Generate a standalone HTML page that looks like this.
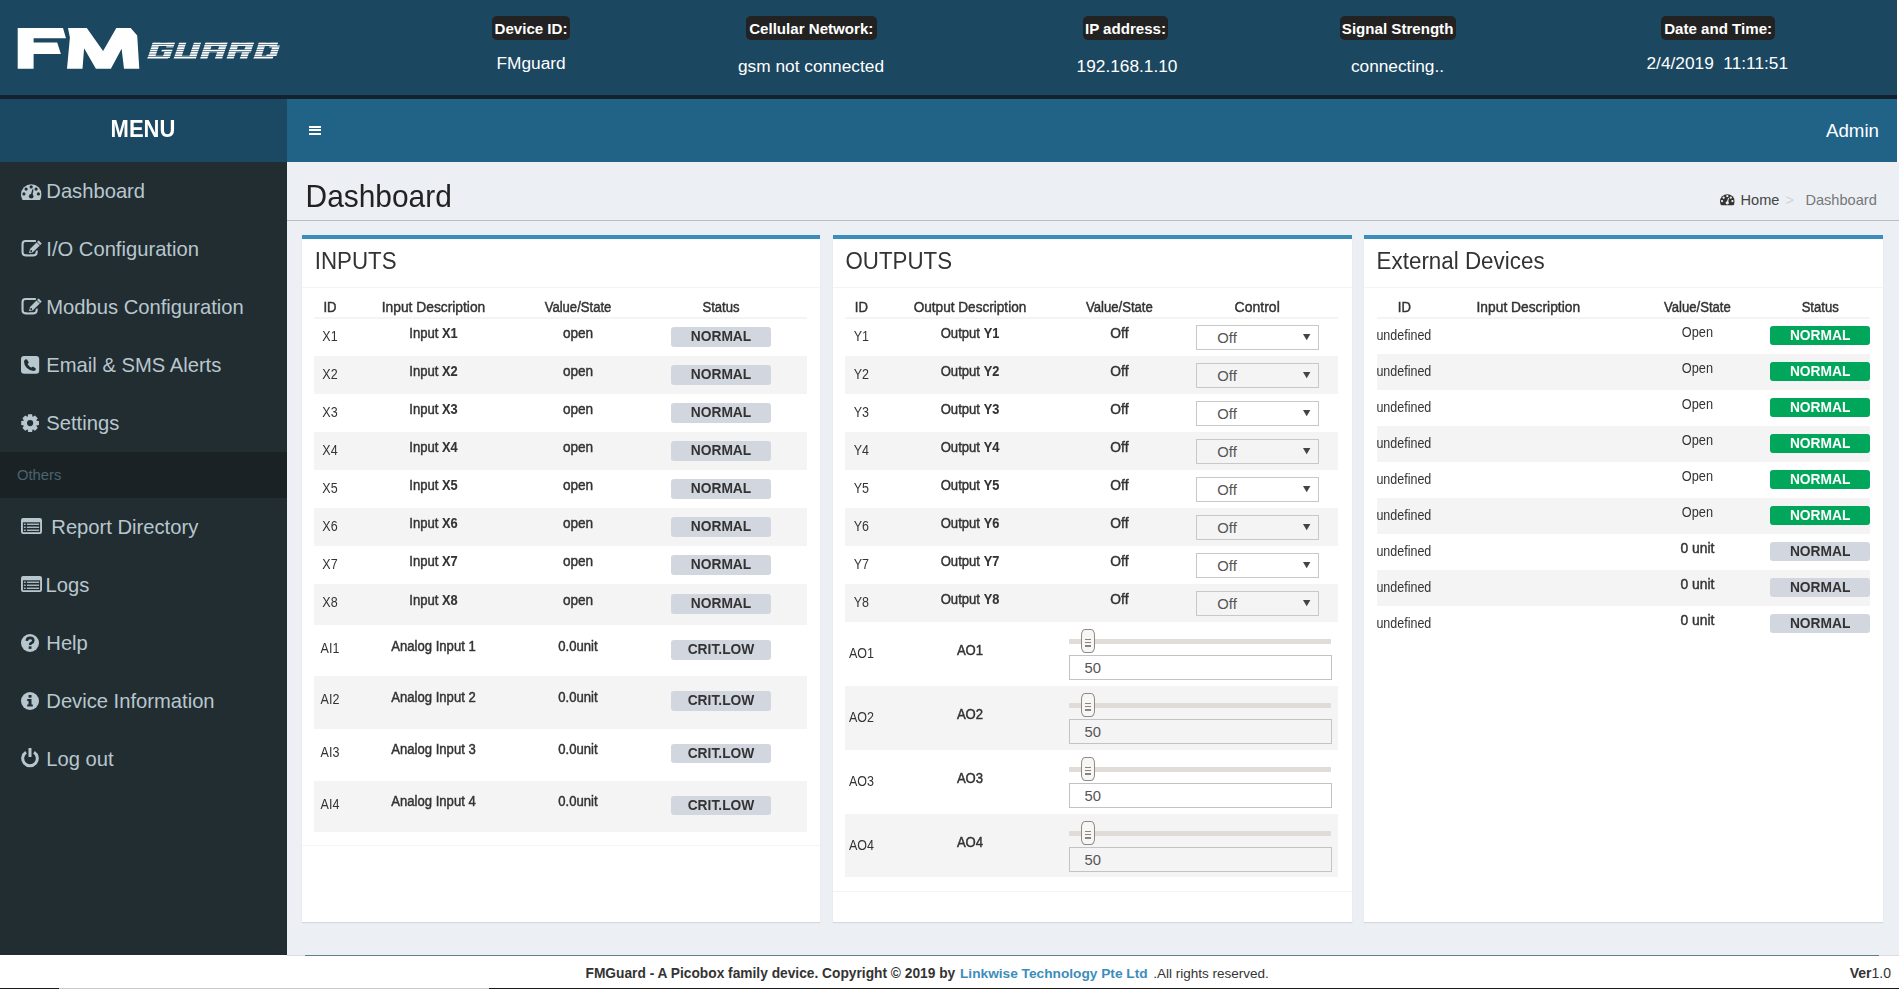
<!DOCTYPE html>
<html><head><meta charset="utf-8"><title>FMGuard Dashboard</title>
<style>
*{box-sizing:border-box;margin:0;padding:0}
html,body{width:1899px;height:989px;overflow:hidden;background:#fff;font-family:"Liberation Sans",sans-serif}
body{position:relative}
svg{position:absolute;overflow:visible}
</style></head><body>

<div style="position:absolute;left:0px;top:0px;width:1897px;height:95px;background:#1b4760;"></div>
<div style="position:absolute;left:0px;top:95px;width:1897px;height:4px;background:#13222d;"></div>
<div style="position:absolute;left:0px;top:99px;width:287px;height:63px;background:#1b4862;"></div>
<div style="position:absolute;left:287px;top:99px;width:1610px;height:63px;background:#216387;"></div>
<div style="position:absolute;left:0px;top:162px;width:287px;height:793px;background:#222d32;"></div>
<div style="position:absolute;left:287px;top:162px;width:1612px;height:793px;background:#ecf0f5;"></div>
<div style="position:absolute;left:0px;top:955px;width:1899px;height:34px;background:#fff;"></div>
<svg style="left:0;top:0" width="300" height="95" viewBox="0 0 300 95">
<polygon fill="#fff" points="17.7,28 63,28 66,38.2 33.6,38.2 33.6,42.5 57.2,42.5 60.9,54 33.6,54 33.6,68.7 17.7,68.7"/>
<polygon fill="#fff" points="68,28 86.8,28 103.1,50.9 116.3,28 130.7,28 137.2,35.4 139.3,68.7 124,68.7 121.6,48.8 110.9,68.7 95.9,68.7 84.1,48.3 82.5,68.7 67,68.7 69.9,37.5"/>
</svg>
<svg style="left:0;top:0" width="300" height="95" viewBox="0 0 300 95">
<defs><mask id="gm" maskUnits="userSpaceOnUse" x="0" y="0" width="300" height="95"><rect x="140" y="42.50" width="150" height="1.75" fill="#fff"/><rect x="140" y="44.87" width="150" height="1.75" fill="#fff"/><rect x="140" y="47.24" width="150" height="1.75" fill="#fff"/><rect x="140" y="49.61" width="150" height="1.75" fill="#fff"/><rect x="140" y="51.99" width="150" height="1.75" fill="#fff"/><rect x="140" y="54.36" width="150" height="1.75" fill="#fff"/><rect x="140" y="56.73" width="150" height="1.75" fill="#fff"/></mask></defs>
<g mask="url(#gm)"><g fill="#fff" transform="translate(0,59.1) skewX(-18.5) translate(0,-16.6)"><rect x="147.30" y="0.00" width="22.00" height="3.40"/><rect x="147.30" y="0.00" width="7.20" height="16.60"/><rect x="147.30" y="13.20" width="20.50" height="3.40"/><rect x="162.10" y="6.90" width="7.20" height="8.70"/><rect x="158.80" y="6.90" width="10.50" height="2.60"/><rect x="162.10" y="0.00" width="7.20" height="5.00"/><rect x="173.60" y="0.00" width="7.20" height="16.60"/><rect x="188.40" y="0.00" width="7.20" height="16.60"/><rect x="173.60" y="13.20" width="22.00" height="3.40"/><rect x="200.00" y="0.00" width="22.00" height="3.40"/><rect x="200.00" y="0.00" width="7.20" height="16.60"/><rect x="214.80" y="0.00" width="7.20" height="16.60"/><rect x="200.00" y="7.00" width="22.00" height="2.80"/><rect x="226.40" y="0.00" width="22.00" height="3.40"/><rect x="226.40" y="0.00" width="7.20" height="16.60"/><rect x="241.20" y="0.00" width="7.20" height="9.80"/><rect x="226.40" y="7.00" width="22.00" height="2.80"/><rect x="239.70" y="9.80" width="7.20" height="6.80"/><rect x="253.40" y="0.00" width="19.00" height="3.40"/><rect x="253.40" y="0.00" width="7.20" height="16.60"/><rect x="268.20" y="3.00" width="7.20" height="10.60"/><rect x="253.40" y="13.20" width="19.00" height="3.40"/><rect x="265.20" y="0.00" width="7.20" height="4.90"/><rect x="265.20" y="11.70" width="7.20" height="4.90"/></g></g>
</svg>
<div style="position:absolute;left:492px;top:16px;width:78px;height:24px;background:#222;border-radius:5px"></div>
<div style="position:absolute;top:21px;font-size:15.1px;line-height:15.1px;font-weight:700;color:#fff;white-space:pre;left:31.00px;width:1000px;text-align:center;">Device ID:</div>
<div style="position:absolute;top:55px;font-size:17.3px;line-height:17.3px;font-weight:400;color:#fff;white-space:pre;left:31.10px;width:1000px;text-align:center;">FMguard</div>
<div style="position:absolute;left:746px;top:16px;width:130.5px;height:24px;background:#222;border-radius:5px"></div>
<div style="position:absolute;top:21px;font-size:15.1px;line-height:15.1px;font-weight:700;color:#fff;white-space:pre;left:311.25px;width:1000px;text-align:center;">Cellular Network:</div>
<div style="position:absolute;top:58px;font-size:17.3px;line-height:17.3px;font-weight:400;color:#fff;white-space:pre;left:311.00px;width:1000px;text-align:center;">gsm not connected</div>
<div style="position:absolute;left:1083px;top:16px;width:85px;height:24px;background:#222;border-radius:5px"></div>
<div style="position:absolute;top:21px;font-size:15.1px;line-height:15.1px;font-weight:700;color:#fff;white-space:pre;left:625.50px;width:1000px;text-align:center;">IP address:</div>
<div style="position:absolute;top:58px;font-size:17.3px;line-height:17.3px;font-weight:400;color:#fff;white-space:pre;left:627.00px;width:1000px;text-align:center;">192.168.1.10</div>
<div style="position:absolute;left:1339.5px;top:16px;width:116.20000000000005px;height:24px;background:#222;border-radius:5px"></div>
<div style="position:absolute;top:21px;font-size:15.1px;line-height:15.1px;font-weight:700;color:#fff;white-space:pre;left:897.60px;width:1000px;text-align:center;">Signal Strength</div>
<div style="position:absolute;top:58px;font-size:17.3px;line-height:17.3px;font-weight:400;color:#fff;white-space:pre;left:897.50px;width:1000px;text-align:center;">connecting..</div>
<div style="position:absolute;left:1661.3px;top:16px;width:113.70000000000005px;height:24px;background:#222;border-radius:5px"></div>
<div style="position:absolute;top:21px;font-size:15.1px;line-height:15.1px;font-weight:700;color:#fff;white-space:pre;left:1218.15px;width:1000px;text-align:center;">Date and Time:</div>
<div style="position:absolute;top:55px;font-size:17.3px;line-height:17.3px;font-weight:400;color:#fff;white-space:pre;left:1217.30px;width:1000px;text-align:center;">2/4/2019  11:11:51</div>
<div style="position:absolute;top:119px;font-size:22px;line-height:22px;font-weight:700;color:#fff;white-space:pre;left:-357.00px;width:1000px;text-align:center;transform:scaleY(1.07);transform-origin:0 18px;">MENU</div>
<div style="position:absolute;left:308.5px;top:125.8px;width:12.4px;height:2px;background:#fff;"></div>
<div style="position:absolute;left:308.5px;top:129.4px;width:12.4px;height:2px;background:#fff;"></div>
<div style="position:absolute;left:308.5px;top:133.0px;width:12.4px;height:2px;background:#fff;"></div>
<div style="position:absolute;top:122px;font-size:18.7px;line-height:18.7px;font-weight:400;color:#fff;white-space:pre;right:20.00px;text-align:right;">Admin</div>
<svg style="left:21.3px;top:183.8px" width="20.6" height="16.1" viewBox="0 0 20.6 16.1"><clipPath id="gc21183"><rect x="0" y="0" width="20.6" height="16.1"/></clipPath>
<circle cx="10.30" cy="10.50" r="10.30" fill="#b8c7ce" clip-path="url(#gc21183)"/>
<g fill="#222d32"><circle cx="10.20" cy="2.90" r="1.60"/><circle cx="5.10" cy="5.10" r="1.60"/><circle cx="15.10" cy="5.10" r="1.60"/>
<circle cx="2.90" cy="9.90" r="1.60"/><circle cx="17.40" cy="9.90" r="1.60"/>
<path d="M9.40,12.00 L11.40,5.30 L12.50,5.60 L11.30,12.30 Z"/><circle cx="10.20" cy="12.30" r="2.30"/></g></svg>
<div style="position:absolute;top:181px;font-size:20.2px;line-height:20.2px;font-weight:400;color:#b8c7ce;white-space:pre;left:46.30px;">Dashboard</div>
<svg style="left:20.8px;top:239.8px" width="22" height="16.5" viewBox="0 0 22 16.5"><path fill="none" stroke="#b8c7ce" stroke-width="2.1" d="M14.9,1.05 H4.55 Q1.55,1.05 1.55,4.05 V12.35 Q1.55,15.35 4.55,15.35 H12.65 Q15.65,15.35 15.65,12.35 V10.6"/>
<polygon fill="#b8c7ce" stroke="#222d32" stroke-width="1.1" points="7.4,13.7 8.42,8.86 17.6,-0.3 21.5,3.6 12.24,12.68"/>
<path stroke="#222d32" stroke-width="0.9" d="M15.5,2.0 L19.2,5.7"/><circle cx="10.2" cy="11.0" r="1.0" fill="#222d32"/></svg>
<div style="position:absolute;top:239px;font-size:20.2px;line-height:20.2px;font-weight:400;color:#b8c7ce;white-space:pre;left:46.30px;">I/O Configuration</div>
<svg style="left:20.8px;top:297.8px" width="22" height="16.5" viewBox="0 0 22 16.5"><path fill="none" stroke="#b8c7ce" stroke-width="2.1" d="M14.9,1.05 H4.55 Q1.55,1.05 1.55,4.05 V12.35 Q1.55,15.35 4.55,15.35 H12.65 Q15.65,15.35 15.65,12.35 V10.6"/>
<polygon fill="#b8c7ce" stroke="#222d32" stroke-width="1.1" points="7.4,13.7 8.42,8.86 17.6,-0.3 21.5,3.6 12.24,12.68"/>
<path stroke="#222d32" stroke-width="0.9" d="M15.5,2.0 L19.2,5.7"/><circle cx="10.2" cy="11.0" r="1.0" fill="#222d32"/></svg>
<div style="position:absolute;top:297px;font-size:20.2px;line-height:20.2px;font-weight:400;color:#b8c7ce;white-space:pre;left:46.30px;">Modbus Configuration</div>
<svg style="left:21px;top:356px" width="18.2" height="17.7" viewBox="0 0 18.2 17.7"><rect x="0" y="0" width="18.2" height="17.7" rx="3.2" fill="#b8c7ce"/>
<path fill="#222d32" d="M4.3,3.6 Q5.4,2.9 6,3.6 L7.6,6 Q8,6.7 7.3,7.3 L6.6,7.9 Q7.8,10.3 10.2,11.7 L10.9,11 Q11.5,10.4 12.2,10.8 L14.5,12.3 Q15.2,12.9 14.6,13.9 Q13.8,15 12.6,15 Q8.6,14.8 5.6,11.8 Q3,9 3,5.6 Q3.1,4.4 4.3,3.6 Z"/></svg>
<div style="position:absolute;top:355px;font-size:20.2px;line-height:20.2px;font-weight:400;color:#b8c7ce;white-space:pre;left:46.30px;">Email &amp; SMS Alerts</div>
<svg style="left:21px;top:414px" width="18.2" height="18.2" viewBox="0 0 18.2 18.2"><polygon fill="#b8c7ce" points="17.98,7.11 17.98,11.09 15.56,11.53 15.39,11.95 16.78,13.98 13.98,16.78 11.95,15.39 11.53,15.56 11.09,17.98 7.11,17.98 6.67,15.56 6.25,15.39 4.22,16.78 1.42,13.98 2.81,11.95 2.64,11.53 0.22,11.09 0.22,7.11 2.64,6.67 2.81,6.25 1.42,4.22 4.22,1.42 6.25,2.81 6.67,2.64 7.11,0.22 11.09,0.22 11.53,2.64 11.95,2.81 13.98,1.42 16.78,4.22 15.39,6.25 15.56,6.67"/><circle cx="9.1" cy="9.1" r="5.9" fill="#b8c7ce"/><circle cx="9.1" cy="9.1" r="3.1" fill="#222d32"/></svg>
<div style="position:absolute;top:413px;font-size:20.2px;line-height:20.2px;font-weight:400;color:#b8c7ce;white-space:pre;left:46.30px;">Settings</div>
<div style="position:absolute;left:0px;top:452px;width:287px;height:46px;background:#1a2226;"></div>
<div style="position:absolute;top:468px;font-size:14.8px;line-height:14.8px;font-weight:400;color:#4b646f;white-space:pre;left:17.00px;">Others</div>
<svg style="left:21px;top:517.8px" width="21" height="16" viewBox="0 0 21 16"><rect x="0" y="0" width="21" height="16" rx="2.2" fill="#b8c7ce"/>
<rect x="1.9" y="4.3" width="17.2" height="9.9" fill="#222d32"/>
<g fill="#b8c7ce"><rect x="2.9" y="5.6" width="1.8" height="1.3"/><rect x="2.9" y="8.6" width="1.8" height="1.3"/><rect x="2.9" y="11.6" width="1.8" height="1.3"/>
<rect x="5.9" y="5.6" width="12.2" height="1.3"/><rect x="5.9" y="8.6" width="12.2" height="1.3"/><rect x="5.9" y="11.6" width="12.2" height="1.3"/></g></svg>
<div style="position:absolute;top:517px;font-size:20.2px;line-height:20.2px;font-weight:400;color:#b8c7ce;white-space:pre;left:51.30px;">Report Directory</div>
<svg style="left:21px;top:575.8px" width="21" height="16" viewBox="0 0 21 16"><rect x="0" y="0" width="21" height="16" rx="2.2" fill="#b8c7ce"/>
<rect x="1.9" y="4.3" width="17.2" height="9.9" fill="#222d32"/>
<g fill="#b8c7ce"><rect x="2.9" y="5.6" width="1.8" height="1.3"/><rect x="2.9" y="8.6" width="1.8" height="1.3"/><rect x="2.9" y="11.6" width="1.8" height="1.3"/>
<rect x="5.9" y="5.6" width="12.2" height="1.3"/><rect x="5.9" y="8.6" width="12.2" height="1.3"/><rect x="5.9" y="11.6" width="12.2" height="1.3"/></g></svg>
<div style="position:absolute;top:575px;font-size:20.2px;line-height:20.2px;font-weight:400;color:#b8c7ce;white-space:pre;left:45.60px;">Logs</div>
<svg style="left:21px;top:633.8px" width="18" height="18" viewBox="0 0 18 18"><circle cx="9" cy="9" r="9" fill="#b8c7ce"/>
<path fill="none" stroke="#222d32" stroke-width="2.6" d="M5.8,6.9 Q5.9,3.9 9.1,3.9 Q12.3,3.9 12.3,6.6 Q12.3,8.2 10.4,9 Q9.1,9.6 9.1,11"/><rect x="7.7" y="12.3" width="2.8" height="2.6" fill="#222d32"/></svg>
<div style="position:absolute;top:633px;font-size:20.2px;line-height:20.2px;font-weight:400;color:#b8c7ce;white-space:pre;left:46.30px;">Help</div>
<svg style="left:21px;top:691.8px" width="18" height="18" viewBox="0 0 18 18"><circle cx="9" cy="9" r="9" fill="#b8c7ce"/>
<rect x="7.6" y="3" width="2.9" height="2.7" fill="#222d32"/><path fill="#222d32" d="M6.2,7 H10.5 V12.6 H11.8 V14.6 H6.2 V12.6 H7.5 V9 H6.2 Z"/></svg>
<div style="position:absolute;top:691px;font-size:20.2px;line-height:20.2px;font-weight:400;color:#b8c7ce;white-space:pre;left:46.30px;">Device Information</div>
<svg style="left:21px;top:748.4px" width="18" height="18" viewBox="0 0 18 18"><path fill="none" stroke="#b8c7ce" stroke-width="3" d="M5,4.3 A7.3,7.3 0 1 0 13,4.3"/><rect x="7.5" y="0" width="3" height="9" rx="0.6" fill="#b8c7ce"/></svg>
<div style="position:absolute;top:749px;font-size:20.2px;line-height:20.2px;font-weight:400;color:#b8c7ce;white-space:pre;left:46.30px;">Log out</div>
<div style="position:absolute;top:182px;font-size:29.9px;line-height:29.9px;font-weight:400;color:#222;white-space:pre;left:305.60px;transform:scaleY(1.07);transform-origin:0 25px;">Dashboard</div>
<div style="position:absolute;left:287px;top:220px;width:1612px;height:1px;background:#b9bec4;"></div>
<svg style="left:1719.5px;top:194px" width="14.7" height="11.2" viewBox="0 0 14.7 11.2"><clipPath id="gc1719194"><rect x="0" y="0" width="14.7" height="11.2"/></clipPath>
<circle cx="7.35" cy="7.49" r="7.35" fill="#333" clip-path="url(#gc1719194)"/>
<g fill="#ecf0f5"><circle cx="7.28" cy="2.07" r="1.14"/><circle cx="3.64" cy="3.64" r="1.14"/><circle cx="10.78" cy="3.64" r="1.14"/>
<circle cx="2.07" cy="7.06" r="1.14"/><circle cx="12.42" cy="7.06" r="1.14"/>
<path d="M6.71,8.56 L8.13,3.78 L8.92,4.00 L8.06,8.78 Z"/><circle cx="7.28" cy="8.78" r="1.64"/></g></svg>
<div style="position:absolute;top:193px;font-size:14.6px;line-height:14.6px;font-weight:400;color:#444;white-space:pre;left:1740.50px;">Home</div>
<div style="position:absolute;top:193px;font-size:14.6px;line-height:14.6px;font-weight:400;color:#d2d2d2;white-space:pre;left:1785.50px;">&gt;</div>
<div style="position:absolute;top:193px;font-size:14.6px;line-height:14.6px;font-weight:400;color:#777;white-space:pre;left:1805.40px;">Dashboard</div>
<div style="position:absolute;left:302px;top:235px;width:518px;height:687px;background:#fff;border-top:4px solid #3c8dbc;box-shadow:0 1px 1px rgba(0,0,0,0.1)"></div>
<div style="position:absolute;left:302px;top:287px;width:518px;height:1px;background:#f4f4f4;"></div>
<div style="position:absolute;left:833px;top:235px;width:519px;height:687px;background:#fff;border-top:4px solid #3c8dbc;box-shadow:0 1px 1px rgba(0,0,0,0.1)"></div>
<div style="position:absolute;left:833px;top:287px;width:519px;height:1px;background:#f4f4f4;"></div>
<div style="position:absolute;left:1364px;top:235px;width:519px;height:687px;background:#fff;border-top:4px solid #3c8dbc;box-shadow:0 1px 1px rgba(0,0,0,0.1)"></div>
<div style="position:absolute;left:1364px;top:287px;width:519px;height:1px;background:#f4f4f4;"></div>
<div style="position:absolute;top:251px;font-size:22.3px;line-height:22.3px;font-weight:400;color:#333;white-space:pre;left:314.80px;transform:scaleY(1.1);transform-origin:0 18px;">INPUTS</div>
<div style="position:absolute;top:251px;font-size:22.3px;line-height:22.3px;font-weight:400;color:#333;white-space:pre;left:845.50px;transform:scaleY(1.1);transform-origin:0 18px;">OUTPUTS</div>
<div style="position:absolute;top:251px;font-size:22.4px;line-height:22.4px;font-weight:400;color:#333;white-space:pre;left:1376.60px;transform:scaleY(1.1);transform-origin:0 18px;">External Devices</div>
<div style="position:absolute;top:301px;font-size:13.1px;line-height:13.1px;font-weight:400;color:#333;white-space:pre;left:230.00px;width:200px;text-align:center;transform:scaleY(1.08);transform-origin:0 11px;-webkit-text-stroke:0.42px #333;">ID</div>
<div style="position:absolute;top:301px;font-size:13.8px;line-height:13.8px;font-weight:400;color:#333;white-space:pre;left:333.50px;width:200px;text-align:center;transform:scaleY(1.08);transform-origin:0 11px;-webkit-text-stroke:0.42px #333;">Input Description</div>
<div style="position:absolute;top:301px;font-size:13.1px;line-height:13.1px;font-weight:400;color:#333;white-space:pre;left:478.00px;width:200px;text-align:center;transform:scaleY(1.08);transform-origin:0 11px;-webkit-text-stroke:0.42px #333;">Value/State</div>
<div style="position:absolute;top:301px;font-size:13.1px;line-height:13.1px;font-weight:400;color:#333;white-space:pre;left:621.00px;width:200px;text-align:center;transform:scaleY(1.08);transform-origin:0 11px;-webkit-text-stroke:0.42px #333;">Status</div>
<div style="position:absolute;left:314px;top:317px;width:493px;height:2px;background:#f4f4f4;"></div>
<div style="position:absolute;top:331px;font-size:12.5px;line-height:12.5px;font-weight:400;color:#333;white-space:pre;left:230.00px;width:200px;text-align:center;transform:scaleY(1.12);transform-origin:0 10px;">X1</div>
<div style="position:absolute;top:327px;font-size:13.1px;line-height:13.1px;font-weight:400;color:#333;white-space:pre;left:333.50px;width:200px;text-align:center;transform:scaleY(1.08);transform-origin:0 11px;-webkit-text-stroke:0.42px #333;">Input <span style="font-weight:700;-webkit-text-stroke:0.1px #333;font-size:12.8px">X1</span></div>
<div style="position:absolute;top:327px;font-size:13.6px;line-height:13.6px;font-weight:400;color:#333;white-space:pre;left:478.00px;width:200px;text-align:center;transform:scaleY(1.08);transform-origin:0 11px;-webkit-text-stroke:0.42px #333;">open</div>
<div style="position:absolute;left:671.00px;top:327.20px;width:100px;height:19.5px;background:#d2d6de;border-radius:3px"></div>
<div style="position:absolute;top:330px;font-size:13.8px;line-height:13.8px;font-weight:700;color:#333;white-space:pre;left:621.00px;width:200px;text-align:center;transform:scaleY(1.04);transform-origin:0 11px;">NORMAL</div>
<div style="position:absolute;left:314px;top:356px;width:493px;height:38px;background:#f4f4f4;"></div>
<div style="position:absolute;top:369px;font-size:12.5px;line-height:12.5px;font-weight:400;color:#333;white-space:pre;left:230.00px;width:200px;text-align:center;transform:scaleY(1.12);transform-origin:0 10px;">X2</div>
<div style="position:absolute;top:365px;font-size:13.1px;line-height:13.1px;font-weight:400;color:#333;white-space:pre;left:333.50px;width:200px;text-align:center;transform:scaleY(1.08);transform-origin:0 11px;-webkit-text-stroke:0.42px #333;">Input <span style="font-weight:700;-webkit-text-stroke:0.1px #333;font-size:12.8px">X2</span></div>
<div style="position:absolute;top:365px;font-size:13.6px;line-height:13.6px;font-weight:400;color:#333;white-space:pre;left:478.00px;width:200px;text-align:center;transform:scaleY(1.08);transform-origin:0 11px;-webkit-text-stroke:0.42px #333;">open</div>
<div style="position:absolute;left:671.00px;top:365.20px;width:100px;height:19.5px;background:#d2d6de;border-radius:3px"></div>
<div style="position:absolute;top:368px;font-size:13.8px;line-height:13.8px;font-weight:700;color:#333;white-space:pre;left:621.00px;width:200px;text-align:center;transform:scaleY(1.04);transform-origin:0 11px;">NORMAL</div>
<div style="position:absolute;top:407px;font-size:12.5px;line-height:12.5px;font-weight:400;color:#333;white-space:pre;left:230.00px;width:200px;text-align:center;transform:scaleY(1.12);transform-origin:0 10px;">X3</div>
<div style="position:absolute;top:403px;font-size:13.1px;line-height:13.1px;font-weight:400;color:#333;white-space:pre;left:333.50px;width:200px;text-align:center;transform:scaleY(1.08);transform-origin:0 11px;-webkit-text-stroke:0.42px #333;">Input <span style="font-weight:700;-webkit-text-stroke:0.1px #333;font-size:12.8px">X3</span></div>
<div style="position:absolute;top:403px;font-size:13.6px;line-height:13.6px;font-weight:400;color:#333;white-space:pre;left:478.00px;width:200px;text-align:center;transform:scaleY(1.08);transform-origin:0 11px;-webkit-text-stroke:0.42px #333;">open</div>
<div style="position:absolute;left:671.00px;top:403.20px;width:100px;height:19.5px;background:#d2d6de;border-radius:3px"></div>
<div style="position:absolute;top:406px;font-size:13.8px;line-height:13.8px;font-weight:700;color:#333;white-space:pre;left:621.00px;width:200px;text-align:center;transform:scaleY(1.04);transform-origin:0 11px;">NORMAL</div>
<div style="position:absolute;left:314px;top:432px;width:493px;height:38px;background:#f4f4f4;"></div>
<div style="position:absolute;top:445px;font-size:12.5px;line-height:12.5px;font-weight:400;color:#333;white-space:pre;left:230.00px;width:200px;text-align:center;transform:scaleY(1.12);transform-origin:0 10px;">X4</div>
<div style="position:absolute;top:441px;font-size:13.1px;line-height:13.1px;font-weight:400;color:#333;white-space:pre;left:333.50px;width:200px;text-align:center;transform:scaleY(1.08);transform-origin:0 11px;-webkit-text-stroke:0.42px #333;">Input <span style="font-weight:700;-webkit-text-stroke:0.1px #333;font-size:12.8px">X4</span></div>
<div style="position:absolute;top:441px;font-size:13.6px;line-height:13.6px;font-weight:400;color:#333;white-space:pre;left:478.00px;width:200px;text-align:center;transform:scaleY(1.08);transform-origin:0 11px;-webkit-text-stroke:0.42px #333;">open</div>
<div style="position:absolute;left:671.00px;top:441.20px;width:100px;height:19.5px;background:#d2d6de;border-radius:3px"></div>
<div style="position:absolute;top:444px;font-size:13.8px;line-height:13.8px;font-weight:700;color:#333;white-space:pre;left:621.00px;width:200px;text-align:center;transform:scaleY(1.04);transform-origin:0 11px;">NORMAL</div>
<div style="position:absolute;top:483px;font-size:12.5px;line-height:12.5px;font-weight:400;color:#333;white-space:pre;left:230.00px;width:200px;text-align:center;transform:scaleY(1.12);transform-origin:0 10px;">X5</div>
<div style="position:absolute;top:479px;font-size:13.1px;line-height:13.1px;font-weight:400;color:#333;white-space:pre;left:333.50px;width:200px;text-align:center;transform:scaleY(1.08);transform-origin:0 11px;-webkit-text-stroke:0.42px #333;">Input <span style="font-weight:700;-webkit-text-stroke:0.1px #333;font-size:12.8px">X5</span></div>
<div style="position:absolute;top:479px;font-size:13.6px;line-height:13.6px;font-weight:400;color:#333;white-space:pre;left:478.00px;width:200px;text-align:center;transform:scaleY(1.08);transform-origin:0 11px;-webkit-text-stroke:0.42px #333;">open</div>
<div style="position:absolute;left:671.00px;top:479.20px;width:100px;height:19.5px;background:#d2d6de;border-radius:3px"></div>
<div style="position:absolute;top:482px;font-size:13.8px;line-height:13.8px;font-weight:700;color:#333;white-space:pre;left:621.00px;width:200px;text-align:center;transform:scaleY(1.04);transform-origin:0 11px;">NORMAL</div>
<div style="position:absolute;left:314px;top:508px;width:493px;height:38px;background:#f4f4f4;"></div>
<div style="position:absolute;top:521px;font-size:12.5px;line-height:12.5px;font-weight:400;color:#333;white-space:pre;left:230.00px;width:200px;text-align:center;transform:scaleY(1.12);transform-origin:0 10px;">X6</div>
<div style="position:absolute;top:517px;font-size:13.1px;line-height:13.1px;font-weight:400;color:#333;white-space:pre;left:333.50px;width:200px;text-align:center;transform:scaleY(1.08);transform-origin:0 11px;-webkit-text-stroke:0.42px #333;">Input <span style="font-weight:700;-webkit-text-stroke:0.1px #333;font-size:12.8px">X6</span></div>
<div style="position:absolute;top:517px;font-size:13.6px;line-height:13.6px;font-weight:400;color:#333;white-space:pre;left:478.00px;width:200px;text-align:center;transform:scaleY(1.08);transform-origin:0 11px;-webkit-text-stroke:0.42px #333;">open</div>
<div style="position:absolute;left:671.00px;top:517.20px;width:100px;height:19.5px;background:#d2d6de;border-radius:3px"></div>
<div style="position:absolute;top:520px;font-size:13.8px;line-height:13.8px;font-weight:700;color:#333;white-space:pre;left:621.00px;width:200px;text-align:center;transform:scaleY(1.04);transform-origin:0 11px;">NORMAL</div>
<div style="position:absolute;top:559px;font-size:12.5px;line-height:12.5px;font-weight:400;color:#333;white-space:pre;left:230.00px;width:200px;text-align:center;transform:scaleY(1.12);transform-origin:0 10px;">X7</div>
<div style="position:absolute;top:555px;font-size:13.1px;line-height:13.1px;font-weight:400;color:#333;white-space:pre;left:333.50px;width:200px;text-align:center;transform:scaleY(1.08);transform-origin:0 11px;-webkit-text-stroke:0.42px #333;">Input <span style="font-weight:700;-webkit-text-stroke:0.1px #333;font-size:12.8px">X7</span></div>
<div style="position:absolute;top:555px;font-size:13.6px;line-height:13.6px;font-weight:400;color:#333;white-space:pre;left:478.00px;width:200px;text-align:center;transform:scaleY(1.08);transform-origin:0 11px;-webkit-text-stroke:0.42px #333;">open</div>
<div style="position:absolute;left:671.00px;top:555.20px;width:100px;height:19.5px;background:#d2d6de;border-radius:3px"></div>
<div style="position:absolute;top:558px;font-size:13.8px;line-height:13.8px;font-weight:700;color:#333;white-space:pre;left:621.00px;width:200px;text-align:center;transform:scaleY(1.04);transform-origin:0 11px;">NORMAL</div>
<div style="position:absolute;left:314px;top:584px;width:493px;height:41px;background:#f4f4f4;"></div>
<div style="position:absolute;top:597px;font-size:12.5px;line-height:12.5px;font-weight:400;color:#333;white-space:pre;left:230.00px;width:200px;text-align:center;transform:scaleY(1.12);transform-origin:0 10px;">X8</div>
<div style="position:absolute;top:594px;font-size:13.1px;line-height:13.1px;font-weight:400;color:#333;white-space:pre;left:333.50px;width:200px;text-align:center;transform:scaleY(1.08);transform-origin:0 11px;-webkit-text-stroke:0.42px #333;">Input <span style="font-weight:700;-webkit-text-stroke:0.1px #333;font-size:12.8px">X8</span></div>
<div style="position:absolute;top:594px;font-size:13.6px;line-height:13.6px;font-weight:400;color:#333;white-space:pre;left:478.00px;width:200px;text-align:center;transform:scaleY(1.08);transform-origin:0 11px;-webkit-text-stroke:0.42px #333;">open</div>
<div style="position:absolute;left:671.00px;top:594.20px;width:100px;height:19.5px;background:#d2d6de;border-radius:3px"></div>
<div style="position:absolute;top:597px;font-size:13.8px;line-height:13.8px;font-weight:700;color:#333;white-space:pre;left:621.00px;width:200px;text-align:center;transform:scaleY(1.04);transform-origin:0 11px;">NORMAL</div>
<div style="position:absolute;top:643px;font-size:12.5px;line-height:12.5px;font-weight:400;color:#333;white-space:pre;left:230.00px;width:200px;text-align:center;transform:scaleY(1.12);transform-origin:0 10px;">AI1</div>
<div style="position:absolute;top:640px;font-size:13.1px;line-height:13.1px;font-weight:400;color:#333;white-space:pre;left:333.50px;width:200px;text-align:center;transform:scaleY(1.08);transform-origin:0 11px;-webkit-text-stroke:0.42px #333;">Analog Input 1</div>
<div style="position:absolute;top:640px;font-size:13.1px;line-height:13.1px;font-weight:400;color:#333;white-space:pre;left:478.00px;width:200px;text-align:center;transform:scaleY(1.08);transform-origin:0 11px;-webkit-text-stroke:0.42px #333;">0.0unit</div>
<div style="position:absolute;left:671.00px;top:640.00px;width:100px;height:19.5px;background:#d2d6de;border-radius:3px"></div>
<div style="position:absolute;top:643px;font-size:13.8px;line-height:13.8px;font-weight:700;color:#333;white-space:pre;left:621.00px;width:200px;text-align:center;transform:scaleY(1.04);transform-origin:0 11px;">CRIT.LOW</div>
<div style="position:absolute;left:314px;top:676px;width:493px;height:52.5px;background:#f4f4f4;"></div>
<div style="position:absolute;top:694px;font-size:12.5px;line-height:12.5px;font-weight:400;color:#333;white-space:pre;left:230.00px;width:200px;text-align:center;transform:scaleY(1.12);transform-origin:0 10px;">AI2</div>
<div style="position:absolute;top:691px;font-size:13.1px;line-height:13.1px;font-weight:400;color:#333;white-space:pre;left:333.50px;width:200px;text-align:center;transform:scaleY(1.08);transform-origin:0 11px;-webkit-text-stroke:0.42px #333;">Analog Input 2</div>
<div style="position:absolute;top:691px;font-size:13.1px;line-height:13.1px;font-weight:400;color:#333;white-space:pre;left:478.00px;width:200px;text-align:center;transform:scaleY(1.08);transform-origin:0 11px;-webkit-text-stroke:0.42px #333;">0.0unit</div>
<div style="position:absolute;left:671.00px;top:691.00px;width:100px;height:19.5px;background:#d2d6de;border-radius:3px"></div>
<div style="position:absolute;top:694px;font-size:13.8px;line-height:13.8px;font-weight:700;color:#333;white-space:pre;left:621.00px;width:200px;text-align:center;transform:scaleY(1.04);transform-origin:0 11px;">CRIT.LOW</div>
<div style="position:absolute;top:747px;font-size:12.5px;line-height:12.5px;font-weight:400;color:#333;white-space:pre;left:230.00px;width:200px;text-align:center;transform:scaleY(1.12);transform-origin:0 10px;">AI3</div>
<div style="position:absolute;top:743px;font-size:13.1px;line-height:13.1px;font-weight:400;color:#333;white-space:pre;left:333.50px;width:200px;text-align:center;transform:scaleY(1.08);transform-origin:0 11px;-webkit-text-stroke:0.42px #333;">Analog Input 3</div>
<div style="position:absolute;top:743px;font-size:13.1px;line-height:13.1px;font-weight:400;color:#333;white-space:pre;left:478.00px;width:200px;text-align:center;transform:scaleY(1.08);transform-origin:0 11px;-webkit-text-stroke:0.42px #333;">0.0unit</div>
<div style="position:absolute;left:671.00px;top:743.50px;width:100px;height:19.5px;background:#d2d6de;border-radius:3px"></div>
<div style="position:absolute;top:747px;font-size:13.8px;line-height:13.8px;font-weight:700;color:#333;white-space:pre;left:621.00px;width:200px;text-align:center;transform:scaleY(1.04);transform-origin:0 11px;">CRIT.LOW</div>
<div style="position:absolute;left:314px;top:780.5px;width:493px;height:51px;background:#f4f4f4;"></div>
<div style="position:absolute;top:799px;font-size:12.5px;line-height:12.5px;font-weight:400;color:#333;white-space:pre;left:230.00px;width:200px;text-align:center;transform:scaleY(1.12);transform-origin:0 10px;">AI4</div>
<div style="position:absolute;top:795px;font-size:13.1px;line-height:13.1px;font-weight:400;color:#333;white-space:pre;left:333.50px;width:200px;text-align:center;transform:scaleY(1.08);transform-origin:0 11px;-webkit-text-stroke:0.42px #333;">Analog Input 4</div>
<div style="position:absolute;top:795px;font-size:13.1px;line-height:13.1px;font-weight:400;color:#333;white-space:pre;left:478.00px;width:200px;text-align:center;transform:scaleY(1.08);transform-origin:0 11px;-webkit-text-stroke:0.42px #333;">0.0unit</div>
<div style="position:absolute;left:671.00px;top:795.50px;width:100px;height:19.5px;background:#d2d6de;border-radius:3px"></div>
<div style="position:absolute;top:799px;font-size:13.8px;line-height:13.8px;font-weight:700;color:#333;white-space:pre;left:621.00px;width:200px;text-align:center;transform:scaleY(1.04);transform-origin:0 11px;">CRIT.LOW</div>
<div style="position:absolute;left:302px;top:845px;width:518px;height:1px;background:#f4f4f4;"></div>
<div style="position:absolute;top:301px;font-size:13.1px;line-height:13.1px;font-weight:400;color:#333;white-space:pre;left:761.40px;width:200px;text-align:center;transform:scaleY(1.08);transform-origin:0 11px;-webkit-text-stroke:0.42px #333;">ID</div>
<div style="position:absolute;top:301px;font-size:13.6px;line-height:13.6px;font-weight:400;color:#333;white-space:pre;left:870.00px;width:200px;text-align:center;transform:scaleY(1.08);transform-origin:0 11px;-webkit-text-stroke:0.42px #333;">Output Description</div>
<div style="position:absolute;top:301px;font-size:13.1px;line-height:13.1px;font-weight:400;color:#333;white-space:pre;left:1019.40px;width:200px;text-align:center;transform:scaleY(1.08);transform-origin:0 11px;-webkit-text-stroke:0.42px #333;">Value/State</div>
<div style="position:absolute;top:300px;font-size:14.0px;line-height:14.0px;font-weight:400;color:#333;white-space:pre;left:1157.20px;width:200px;text-align:center;transform:scaleY(1.08);transform-origin:0 12px;-webkit-text-stroke:0.42px #333;">Control</div>
<div style="position:absolute;left:845px;top:317px;width:493px;height:2px;background:#f4f4f4;"></div>
<div style="position:absolute;top:331px;font-size:12.5px;line-height:12.5px;font-weight:400;color:#333;white-space:pre;left:761.40px;width:200px;text-align:center;transform:scaleY(1.12);transform-origin:0 10px;">Y1</div>
<div style="position:absolute;top:327px;font-size:13.1px;line-height:13.1px;font-weight:400;color:#333;white-space:pre;left:870.00px;width:200px;text-align:center;transform:scaleY(1.08);transform-origin:0 11px;-webkit-text-stroke:0.42px #333;">Output <span style="font-weight:700;-webkit-text-stroke:0.1px #333;font-size:12.8px">Y1</span></div>
<div style="position:absolute;top:327px;font-size:13.8px;line-height:13.8px;font-weight:400;color:#333;white-space:pre;left:1019.40px;width:200px;text-align:center;transform:scaleY(1.08);transform-origin:0 11px;-webkit-text-stroke:0.42px #333;">Off</div>
<div style="position:absolute;left:1196px;top:325.30px;width:123px;height:24.5px;border:1px solid #c8c8c8"></div>
<div style="position:absolute;top:331px;font-size:14.8px;line-height:14.8px;font-weight:400;color:#555;white-space:pre;left:1217.30px;">Off</div>
<svg style="left:1302.9px;top:334.20px" width="7.4" height="6.2" viewBox="0 0 7.4 6.2"><path d="M0,0 H7.4 L3.7,6.2 Z" fill="#444"/></svg>
<div style="position:absolute;left:845px;top:356px;width:493px;height:38px;background:#f4f4f4;"></div>
<div style="position:absolute;top:369px;font-size:12.5px;line-height:12.5px;font-weight:400;color:#333;white-space:pre;left:761.40px;width:200px;text-align:center;transform:scaleY(1.12);transform-origin:0 10px;">Y2</div>
<div style="position:absolute;top:365px;font-size:13.1px;line-height:13.1px;font-weight:400;color:#333;white-space:pre;left:870.00px;width:200px;text-align:center;transform:scaleY(1.08);transform-origin:0 11px;-webkit-text-stroke:0.42px #333;">Output <span style="font-weight:700;-webkit-text-stroke:0.1px #333;font-size:12.8px">Y2</span></div>
<div style="position:absolute;top:365px;font-size:13.8px;line-height:13.8px;font-weight:400;color:#333;white-space:pre;left:1019.40px;width:200px;text-align:center;transform:scaleY(1.08);transform-origin:0 11px;-webkit-text-stroke:0.42px #333;">Off</div>
<div style="position:absolute;left:1196px;top:363.30px;width:123px;height:24.5px;border:1px solid #c8c8c8"></div>
<div style="position:absolute;top:369px;font-size:14.8px;line-height:14.8px;font-weight:400;color:#555;white-space:pre;left:1217.30px;">Off</div>
<svg style="left:1302.9px;top:372.20px" width="7.4" height="6.2" viewBox="0 0 7.4 6.2"><path d="M0,0 H7.4 L3.7,6.2 Z" fill="#444"/></svg>
<div style="position:absolute;top:407px;font-size:12.5px;line-height:12.5px;font-weight:400;color:#333;white-space:pre;left:761.40px;width:200px;text-align:center;transform:scaleY(1.12);transform-origin:0 10px;">Y3</div>
<div style="position:absolute;top:403px;font-size:13.1px;line-height:13.1px;font-weight:400;color:#333;white-space:pre;left:870.00px;width:200px;text-align:center;transform:scaleY(1.08);transform-origin:0 11px;-webkit-text-stroke:0.42px #333;">Output <span style="font-weight:700;-webkit-text-stroke:0.1px #333;font-size:12.8px">Y3</span></div>
<div style="position:absolute;top:403px;font-size:13.8px;line-height:13.8px;font-weight:400;color:#333;white-space:pre;left:1019.40px;width:200px;text-align:center;transform:scaleY(1.08);transform-origin:0 11px;-webkit-text-stroke:0.42px #333;">Off</div>
<div style="position:absolute;left:1196px;top:401.30px;width:123px;height:24.5px;border:1px solid #c8c8c8"></div>
<div style="position:absolute;top:407px;font-size:14.8px;line-height:14.8px;font-weight:400;color:#555;white-space:pre;left:1217.30px;">Off</div>
<svg style="left:1302.9px;top:410.20px" width="7.4" height="6.2" viewBox="0 0 7.4 6.2"><path d="M0,0 H7.4 L3.7,6.2 Z" fill="#444"/></svg>
<div style="position:absolute;left:845px;top:432px;width:493px;height:38px;background:#f4f4f4;"></div>
<div style="position:absolute;top:445px;font-size:12.5px;line-height:12.5px;font-weight:400;color:#333;white-space:pre;left:761.40px;width:200px;text-align:center;transform:scaleY(1.12);transform-origin:0 10px;">Y4</div>
<div style="position:absolute;top:441px;font-size:13.1px;line-height:13.1px;font-weight:400;color:#333;white-space:pre;left:870.00px;width:200px;text-align:center;transform:scaleY(1.08);transform-origin:0 11px;-webkit-text-stroke:0.42px #333;">Output <span style="font-weight:700;-webkit-text-stroke:0.1px #333;font-size:12.8px">Y4</span></div>
<div style="position:absolute;top:441px;font-size:13.8px;line-height:13.8px;font-weight:400;color:#333;white-space:pre;left:1019.40px;width:200px;text-align:center;transform:scaleY(1.08);transform-origin:0 11px;-webkit-text-stroke:0.42px #333;">Off</div>
<div style="position:absolute;left:1196px;top:439.30px;width:123px;height:24.5px;border:1px solid #c8c8c8"></div>
<div style="position:absolute;top:445px;font-size:14.8px;line-height:14.8px;font-weight:400;color:#555;white-space:pre;left:1217.30px;">Off</div>
<svg style="left:1302.9px;top:448.20px" width="7.4" height="6.2" viewBox="0 0 7.4 6.2"><path d="M0,0 H7.4 L3.7,6.2 Z" fill="#444"/></svg>
<div style="position:absolute;top:483px;font-size:12.5px;line-height:12.5px;font-weight:400;color:#333;white-space:pre;left:761.40px;width:200px;text-align:center;transform:scaleY(1.12);transform-origin:0 10px;">Y5</div>
<div style="position:absolute;top:479px;font-size:13.1px;line-height:13.1px;font-weight:400;color:#333;white-space:pre;left:870.00px;width:200px;text-align:center;transform:scaleY(1.08);transform-origin:0 11px;-webkit-text-stroke:0.42px #333;">Output <span style="font-weight:700;-webkit-text-stroke:0.1px #333;font-size:12.8px">Y5</span></div>
<div style="position:absolute;top:479px;font-size:13.8px;line-height:13.8px;font-weight:400;color:#333;white-space:pre;left:1019.40px;width:200px;text-align:center;transform:scaleY(1.08);transform-origin:0 11px;-webkit-text-stroke:0.42px #333;">Off</div>
<div style="position:absolute;left:1196px;top:477.30px;width:123px;height:24.5px;border:1px solid #c8c8c8"></div>
<div style="position:absolute;top:483px;font-size:14.8px;line-height:14.8px;font-weight:400;color:#555;white-space:pre;left:1217.30px;">Off</div>
<svg style="left:1302.9px;top:486.20px" width="7.4" height="6.2" viewBox="0 0 7.4 6.2"><path d="M0,0 H7.4 L3.7,6.2 Z" fill="#444"/></svg>
<div style="position:absolute;left:845px;top:508px;width:493px;height:38px;background:#f4f4f4;"></div>
<div style="position:absolute;top:521px;font-size:12.5px;line-height:12.5px;font-weight:400;color:#333;white-space:pre;left:761.40px;width:200px;text-align:center;transform:scaleY(1.12);transform-origin:0 10px;">Y6</div>
<div style="position:absolute;top:517px;font-size:13.1px;line-height:13.1px;font-weight:400;color:#333;white-space:pre;left:870.00px;width:200px;text-align:center;transform:scaleY(1.08);transform-origin:0 11px;-webkit-text-stroke:0.42px #333;">Output <span style="font-weight:700;-webkit-text-stroke:0.1px #333;font-size:12.8px">Y6</span></div>
<div style="position:absolute;top:517px;font-size:13.8px;line-height:13.8px;font-weight:400;color:#333;white-space:pre;left:1019.40px;width:200px;text-align:center;transform:scaleY(1.08);transform-origin:0 11px;-webkit-text-stroke:0.42px #333;">Off</div>
<div style="position:absolute;left:1196px;top:515.30px;width:123px;height:24.5px;border:1px solid #c8c8c8"></div>
<div style="position:absolute;top:521px;font-size:14.8px;line-height:14.8px;font-weight:400;color:#555;white-space:pre;left:1217.30px;">Off</div>
<svg style="left:1302.9px;top:524.20px" width="7.4" height="6.2" viewBox="0 0 7.4 6.2"><path d="M0,0 H7.4 L3.7,6.2 Z" fill="#444"/></svg>
<div style="position:absolute;top:559px;font-size:12.5px;line-height:12.5px;font-weight:400;color:#333;white-space:pre;left:761.40px;width:200px;text-align:center;transform:scaleY(1.12);transform-origin:0 10px;">Y7</div>
<div style="position:absolute;top:555px;font-size:13.1px;line-height:13.1px;font-weight:400;color:#333;white-space:pre;left:870.00px;width:200px;text-align:center;transform:scaleY(1.08);transform-origin:0 11px;-webkit-text-stroke:0.42px #333;">Output <span style="font-weight:700;-webkit-text-stroke:0.1px #333;font-size:12.8px">Y7</span></div>
<div style="position:absolute;top:555px;font-size:13.8px;line-height:13.8px;font-weight:400;color:#333;white-space:pre;left:1019.40px;width:200px;text-align:center;transform:scaleY(1.08);transform-origin:0 11px;-webkit-text-stroke:0.42px #333;">Off</div>
<div style="position:absolute;left:1196px;top:553.30px;width:123px;height:24.5px;border:1px solid #c8c8c8"></div>
<div style="position:absolute;top:559px;font-size:14.8px;line-height:14.8px;font-weight:400;color:#555;white-space:pre;left:1217.30px;">Off</div>
<svg style="left:1302.9px;top:562.20px" width="7.4" height="6.2" viewBox="0 0 7.4 6.2"><path d="M0,0 H7.4 L3.7,6.2 Z" fill="#444"/></svg>
<div style="position:absolute;left:845px;top:584px;width:493px;height:38px;background:#f4f4f4;"></div>
<div style="position:absolute;top:597px;font-size:12.5px;line-height:12.5px;font-weight:400;color:#333;white-space:pre;left:761.40px;width:200px;text-align:center;transform:scaleY(1.12);transform-origin:0 10px;">Y8</div>
<div style="position:absolute;top:593px;font-size:13.1px;line-height:13.1px;font-weight:400;color:#333;white-space:pre;left:870.00px;width:200px;text-align:center;transform:scaleY(1.08);transform-origin:0 11px;-webkit-text-stroke:0.42px #333;">Output <span style="font-weight:700;-webkit-text-stroke:0.1px #333;font-size:12.8px">Y8</span></div>
<div style="position:absolute;top:593px;font-size:13.8px;line-height:13.8px;font-weight:400;color:#333;white-space:pre;left:1019.40px;width:200px;text-align:center;transform:scaleY(1.08);transform-origin:0 11px;-webkit-text-stroke:0.42px #333;">Off</div>
<div style="position:absolute;left:1196px;top:591.30px;width:123px;height:24.5px;border:1px solid #c8c8c8"></div>
<div style="position:absolute;top:597px;font-size:14.8px;line-height:14.8px;font-weight:400;color:#555;white-space:pre;left:1217.30px;">Off</div>
<svg style="left:1302.9px;top:600.20px" width="7.4" height="6.2" viewBox="0 0 7.4 6.2"><path d="M0,0 H7.4 L3.7,6.2 Z" fill="#444"/></svg>
<div style="position:absolute;top:648px;font-size:12.5px;line-height:12.5px;font-weight:400;color:#333;white-space:pre;left:761.40px;width:200px;text-align:center;transform:scaleY(1.12);transform-origin:0 10px;">AO1</div>
<div style="position:absolute;top:644px;font-size:13.1px;line-height:13.1px;font-weight:400;color:#333;white-space:pre;left:870.00px;width:200px;text-align:center;transform:scaleY(1.08);transform-origin:0 11px;-webkit-text-stroke:0.42px #333;">AO1</div>
<div style="position:absolute;left:1069px;top:639px;width:262px;height:4.6px;background:#e0ddd8;"></div>
<div style="position:absolute;left:1081px;top:628.70px;width:13.5px;height:24.7px;background:#f7f6f4;border:1px solid #8f8a85;border-radius:4px/6px"></div>
<div style="position:absolute;left:1084.5px;top:639.2px;width:6.5px;height:1.2px;background:#8a857f;"></div>
<div style="position:absolute;left:1084.5px;top:642.2px;width:6.5px;height:1.2px;background:#8a857f;"></div>
<div style="position:absolute;left:1084.5px;top:645.2px;width:6.5px;height:2px;background:#8a857f;"></div>
<div style="position:absolute;left:1069px;top:655.00px;width:263px;height:24.5px;border:1px solid #c3c3c3"></div>
<div style="position:absolute;top:661px;font-size:14.8px;line-height:14.8px;font-weight:400;color:#555;white-space:pre;left:1084.50px;">50</div>
<div style="position:absolute;left:845px;top:686px;width:493px;height:64px;background:#f4f4f4;"></div>
<div style="position:absolute;top:712px;font-size:12.5px;line-height:12.5px;font-weight:400;color:#333;white-space:pre;left:761.40px;width:200px;text-align:center;transform:scaleY(1.12);transform-origin:0 10px;">AO2</div>
<div style="position:absolute;top:708px;font-size:13.1px;line-height:13.1px;font-weight:400;color:#333;white-space:pre;left:870.00px;width:200px;text-align:center;transform:scaleY(1.08);transform-origin:0 11px;-webkit-text-stroke:0.42px #333;">AO2</div>
<div style="position:absolute;left:1069px;top:703px;width:262px;height:4.6px;background:#e0ddd8;"></div>
<div style="position:absolute;left:1081px;top:692.70px;width:13.5px;height:24.7px;background:#f7f6f4;border:1px solid #8f8a85;border-radius:4px/6px"></div>
<div style="position:absolute;left:1084.5px;top:703.2px;width:6.5px;height:1.2px;background:#8a857f;"></div>
<div style="position:absolute;left:1084.5px;top:706.2px;width:6.5px;height:1.2px;background:#8a857f;"></div>
<div style="position:absolute;left:1084.5px;top:709.2px;width:6.5px;height:2px;background:#8a857f;"></div>
<div style="position:absolute;left:1069px;top:719.00px;width:263px;height:24.5px;border:1px solid #c3c3c3"></div>
<div style="position:absolute;top:725px;font-size:14.8px;line-height:14.8px;font-weight:400;color:#555;white-space:pre;left:1084.50px;">50</div>
<div style="position:absolute;top:776px;font-size:12.5px;line-height:12.5px;font-weight:400;color:#333;white-space:pre;left:761.40px;width:200px;text-align:center;transform:scaleY(1.12);transform-origin:0 10px;">AO3</div>
<div style="position:absolute;top:772px;font-size:13.1px;line-height:13.1px;font-weight:400;color:#333;white-space:pre;left:870.00px;width:200px;text-align:center;transform:scaleY(1.08);transform-origin:0 11px;-webkit-text-stroke:0.42px #333;">AO3</div>
<div style="position:absolute;left:1069px;top:767px;width:262px;height:4.6px;background:#e0ddd8;"></div>
<div style="position:absolute;left:1081px;top:756.70px;width:13.5px;height:24.7px;background:#f7f6f4;border:1px solid #8f8a85;border-radius:4px/6px"></div>
<div style="position:absolute;left:1084.5px;top:767.2px;width:6.5px;height:1.2px;background:#8a857f;"></div>
<div style="position:absolute;left:1084.5px;top:770.2px;width:6.5px;height:1.2px;background:#8a857f;"></div>
<div style="position:absolute;left:1084.5px;top:773.2px;width:6.5px;height:2px;background:#8a857f;"></div>
<div style="position:absolute;left:1069px;top:783.00px;width:263px;height:24.5px;border:1px solid #c3c3c3"></div>
<div style="position:absolute;top:789px;font-size:14.8px;line-height:14.8px;font-weight:400;color:#555;white-space:pre;left:1084.50px;">50</div>
<div style="position:absolute;left:845px;top:814px;width:493px;height:63px;background:#f4f4f4;"></div>
<div style="position:absolute;top:840px;font-size:12.5px;line-height:12.5px;font-weight:400;color:#333;white-space:pre;left:761.40px;width:200px;text-align:center;transform:scaleY(1.12);transform-origin:0 10px;">AO4</div>
<div style="position:absolute;top:836px;font-size:13.1px;line-height:13.1px;font-weight:400;color:#333;white-space:pre;left:870.00px;width:200px;text-align:center;transform:scaleY(1.08);transform-origin:0 11px;-webkit-text-stroke:0.42px #333;">AO4</div>
<div style="position:absolute;left:1069px;top:831px;width:262px;height:4.6px;background:#e0ddd8;"></div>
<div style="position:absolute;left:1081px;top:820.70px;width:13.5px;height:24.7px;background:#f7f6f4;border:1px solid #8f8a85;border-radius:4px/6px"></div>
<div style="position:absolute;left:1084.5px;top:831.2px;width:6.5px;height:1.2px;background:#8a857f;"></div>
<div style="position:absolute;left:1084.5px;top:834.2px;width:6.5px;height:1.2px;background:#8a857f;"></div>
<div style="position:absolute;left:1084.5px;top:837.2px;width:6.5px;height:2px;background:#8a857f;"></div>
<div style="position:absolute;left:1069px;top:847.00px;width:263px;height:24.5px;border:1px solid #c3c3c3"></div>
<div style="position:absolute;top:853px;font-size:14.8px;line-height:14.8px;font-weight:400;color:#555;white-space:pre;left:1084.50px;">50</div>
<div style="position:absolute;left:833px;top:891px;width:519px;height:1px;background:#f4f4f4;"></div>
<div style="position:absolute;top:301px;font-size:13.1px;line-height:13.1px;font-weight:400;color:#333;white-space:pre;left:1304.40px;width:200px;text-align:center;transform:scaleY(1.08);transform-origin:0 11px;-webkit-text-stroke:0.42px #333;">ID</div>
<div style="position:absolute;top:301px;font-size:13.8px;line-height:13.8px;font-weight:400;color:#333;white-space:pre;left:1428.30px;width:200px;text-align:center;transform:scaleY(1.08);transform-origin:0 11px;-webkit-text-stroke:0.42px #333;">Input Description</div>
<div style="position:absolute;top:301px;font-size:13.1px;line-height:13.1px;font-weight:400;color:#333;white-space:pre;left:1597.40px;width:200px;text-align:center;transform:scaleY(1.08);transform-origin:0 11px;-webkit-text-stroke:0.42px #333;">Value/State</div>
<div style="position:absolute;top:301px;font-size:13.1px;line-height:13.1px;font-weight:400;color:#333;white-space:pre;left:1720.20px;width:200px;text-align:center;transform:scaleY(1.08);transform-origin:0 11px;-webkit-text-stroke:0.42px #333;">Status</div>
<div style="position:absolute;left:1377px;top:317px;width:493px;height:2px;background:#f4f4f4;"></div>
<div style="position:absolute;top:330px;font-size:12.5px;line-height:12.5px;font-weight:400;color:#333;white-space:pre;left:1376.40px;transform:scaleY(1.12);transform-origin:0 10px;">undefined</div>
<div style="position:absolute;top:327px;font-size:12.8px;line-height:12.8px;font-weight:400;color:#333;white-space:pre;left:1597.40px;width:200px;text-align:center;transform:scaleY(1.12);transform-origin:0 10px;">Open</div>
<div style="position:absolute;left:1770.20px;top:325.80px;width:100px;height:19.5px;background:#00a65a;border-radius:3px"></div>
<div style="position:absolute;top:329px;font-size:13.8px;line-height:13.8px;font-weight:700;color:#fff;white-space:pre;left:1720.20px;width:200px;text-align:center;transform:scaleY(1.04);transform-origin:0 11px;">NORMAL</div>
<div style="position:absolute;left:1377px;top:354px;width:493px;height:36px;background:#f4f4f4;"></div>
<div style="position:absolute;top:366px;font-size:12.5px;line-height:12.5px;font-weight:400;color:#333;white-space:pre;left:1376.40px;transform:scaleY(1.12);transform-origin:0 10px;">undefined</div>
<div style="position:absolute;top:363px;font-size:12.8px;line-height:12.8px;font-weight:400;color:#333;white-space:pre;left:1597.40px;width:200px;text-align:center;transform:scaleY(1.12);transform-origin:0 10px;">Open</div>
<div style="position:absolute;left:1770.20px;top:361.80px;width:100px;height:19.5px;background:#00a65a;border-radius:3px"></div>
<div style="position:absolute;top:365px;font-size:13.8px;line-height:13.8px;font-weight:700;color:#fff;white-space:pre;left:1720.20px;width:200px;text-align:center;transform:scaleY(1.04);transform-origin:0 11px;">NORMAL</div>
<div style="position:absolute;top:402px;font-size:12.5px;line-height:12.5px;font-weight:400;color:#333;white-space:pre;left:1376.40px;transform:scaleY(1.12);transform-origin:0 10px;">undefined</div>
<div style="position:absolute;top:399px;font-size:12.8px;line-height:12.8px;font-weight:400;color:#333;white-space:pre;left:1597.40px;width:200px;text-align:center;transform:scaleY(1.12);transform-origin:0 10px;">Open</div>
<div style="position:absolute;left:1770.20px;top:397.80px;width:100px;height:19.5px;background:#00a65a;border-radius:3px"></div>
<div style="position:absolute;top:401px;font-size:13.8px;line-height:13.8px;font-weight:700;color:#fff;white-space:pre;left:1720.20px;width:200px;text-align:center;transform:scaleY(1.04);transform-origin:0 11px;">NORMAL</div>
<div style="position:absolute;left:1377px;top:426px;width:493px;height:36px;background:#f4f4f4;"></div>
<div style="position:absolute;top:438px;font-size:12.5px;line-height:12.5px;font-weight:400;color:#333;white-space:pre;left:1376.40px;transform:scaleY(1.12);transform-origin:0 10px;">undefined</div>
<div style="position:absolute;top:435px;font-size:12.8px;line-height:12.8px;font-weight:400;color:#333;white-space:pre;left:1597.40px;width:200px;text-align:center;transform:scaleY(1.12);transform-origin:0 10px;">Open</div>
<div style="position:absolute;left:1770.20px;top:433.80px;width:100px;height:19.5px;background:#00a65a;border-radius:3px"></div>
<div style="position:absolute;top:437px;font-size:13.8px;line-height:13.8px;font-weight:700;color:#fff;white-space:pre;left:1720.20px;width:200px;text-align:center;transform:scaleY(1.04);transform-origin:0 11px;">NORMAL</div>
<div style="position:absolute;top:474px;font-size:12.5px;line-height:12.5px;font-weight:400;color:#333;white-space:pre;left:1376.40px;transform:scaleY(1.12);transform-origin:0 10px;">undefined</div>
<div style="position:absolute;top:471px;font-size:12.8px;line-height:12.8px;font-weight:400;color:#333;white-space:pre;left:1597.40px;width:200px;text-align:center;transform:scaleY(1.12);transform-origin:0 10px;">Open</div>
<div style="position:absolute;left:1770.20px;top:469.80px;width:100px;height:19.5px;background:#00a65a;border-radius:3px"></div>
<div style="position:absolute;top:473px;font-size:13.8px;line-height:13.8px;font-weight:700;color:#fff;white-space:pre;left:1720.20px;width:200px;text-align:center;transform:scaleY(1.04);transform-origin:0 11px;">NORMAL</div>
<div style="position:absolute;left:1377px;top:498px;width:493px;height:36px;background:#f4f4f4;"></div>
<div style="position:absolute;top:510px;font-size:12.5px;line-height:12.5px;font-weight:400;color:#333;white-space:pre;left:1376.40px;transform:scaleY(1.12);transform-origin:0 10px;">undefined</div>
<div style="position:absolute;top:507px;font-size:12.8px;line-height:12.8px;font-weight:400;color:#333;white-space:pre;left:1597.40px;width:200px;text-align:center;transform:scaleY(1.12);transform-origin:0 10px;">Open</div>
<div style="position:absolute;left:1770.20px;top:505.80px;width:100px;height:19.5px;background:#00a65a;border-radius:3px"></div>
<div style="position:absolute;top:509px;font-size:13.8px;line-height:13.8px;font-weight:700;color:#fff;white-space:pre;left:1720.20px;width:200px;text-align:center;transform:scaleY(1.04);transform-origin:0 11px;">NORMAL</div>
<div style="position:absolute;top:546px;font-size:12.5px;line-height:12.5px;font-weight:400;color:#333;white-space:pre;left:1376.40px;transform:scaleY(1.12);transform-origin:0 10px;">undefined</div>
<div style="position:absolute;top:542px;font-size:13.9px;line-height:13.9px;font-weight:400;color:#333;white-space:pre;left:1597.40px;width:200px;text-align:center;transform:scaleY(1.08);transform-origin:0 11px;-webkit-text-stroke:0.42px #333;">0 unit</div>
<div style="position:absolute;left:1770.20px;top:541.80px;width:100px;height:19.5px;background:#d2d6de;border-radius:3px"></div>
<div style="position:absolute;top:545px;font-size:13.8px;line-height:13.8px;font-weight:700;color:#333;white-space:pre;left:1720.20px;width:200px;text-align:center;transform:scaleY(1.04);transform-origin:0 11px;">NORMAL</div>
<div style="position:absolute;left:1377px;top:570px;width:493px;height:36px;background:#f4f4f4;"></div>
<div style="position:absolute;top:582px;font-size:12.5px;line-height:12.5px;font-weight:400;color:#333;white-space:pre;left:1376.40px;transform:scaleY(1.12);transform-origin:0 10px;">undefined</div>
<div style="position:absolute;top:578px;font-size:13.9px;line-height:13.9px;font-weight:400;color:#333;white-space:pre;left:1597.40px;width:200px;text-align:center;transform:scaleY(1.08);transform-origin:0 11px;-webkit-text-stroke:0.42px #333;">0 unit</div>
<div style="position:absolute;left:1770.20px;top:577.80px;width:100px;height:19.5px;background:#d2d6de;border-radius:3px"></div>
<div style="position:absolute;top:581px;font-size:13.8px;line-height:13.8px;font-weight:700;color:#333;white-space:pre;left:1720.20px;width:200px;text-align:center;transform:scaleY(1.04);transform-origin:0 11px;">NORMAL</div>
<div style="position:absolute;top:618px;font-size:12.5px;line-height:12.5px;font-weight:400;color:#333;white-space:pre;left:1376.40px;transform:scaleY(1.12);transform-origin:0 10px;">undefined</div>
<div style="position:absolute;top:614px;font-size:13.9px;line-height:13.9px;font-weight:400;color:#333;white-space:pre;left:1597.40px;width:200px;text-align:center;transform:scaleY(1.08);transform-origin:0 11px;-webkit-text-stroke:0.42px #333;">0 unit</div>
<div style="position:absolute;left:1770.20px;top:613.80px;width:100px;height:19.5px;background:#d2d6de;border-radius:3px"></div>
<div style="position:absolute;top:617px;font-size:13.8px;line-height:13.8px;font-weight:700;color:#333;white-space:pre;left:1720.20px;width:200px;text-align:center;transform:scaleY(1.04);transform-origin:0 11px;">NORMAL</div>
<div style="position:absolute;left:287px;top:955px;width:18px;height:1px;background:#dcdcdc;"></div>
<div style="position:absolute;left:305px;top:955px;width:1574px;height:1px;background:#617f8a;"></div>
<div style="position:absolute;left:1879px;top:955px;width:20px;height:1px;background:#dcdcdc;"></div>
<div style="position:absolute;top:967px;font-size:13.75px;line-height:13.75px;font-weight:700;color:#333;white-space:pre;left:585.50px;">FMGuard - A Picobox family device. Copyright © 2019 by </div>
<div style="position:absolute;top:967px;font-size:13.7px;line-height:13.7px;font-weight:700;color:#3c8dbc;white-space:pre;left:960.00px;">Linkwise Technology Pte Ltd</div>
<div style="position:absolute;top:967px;font-size:13.5px;line-height:13.5px;font-weight:400;color:#333;white-space:pre;left:1153.30px;">.All rights reserved.</div>
<div style="position:absolute;top:966px;font-size:14px;line-height:14px;font-weight:400;color:#333;white-space:pre;right:8.00px;text-align:right;"><b>Ver</b>1.0</div>
<div style="position:absolute;left:0px;top:988px;width:59px;height:1px;background:#1a1a1a;"></div>
<div style="position:absolute;left:59px;top:988px;width:430px;height:1px;background:#c8c8c8;"></div>
<div style="position:absolute;left:489px;top:988px;width:1410px;height:1px;background:#1a1a1a;"></div>
</body></html>
